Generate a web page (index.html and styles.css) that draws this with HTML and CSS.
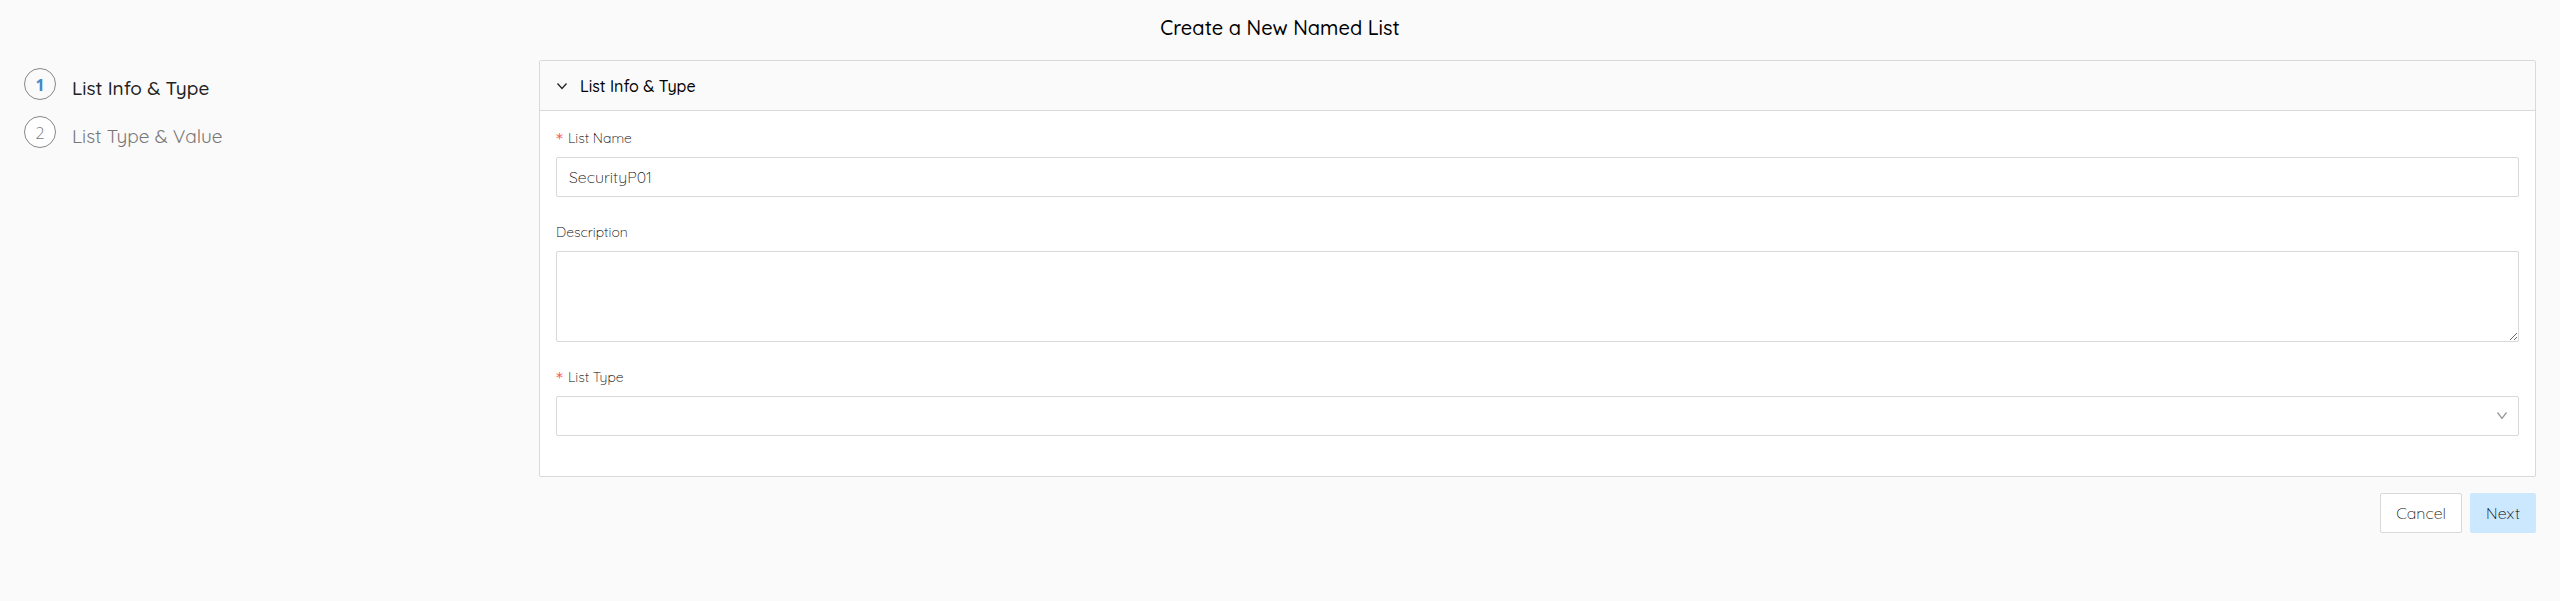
FILE: index.html
```html
<!DOCTYPE html>
<html lang="en">
<head>
<meta charset="utf-8">
<meta name="viewport" content="width=device-width, initial-scale=1">
<title>Create a New Named List</title>
<link rel="stylesheet" href="styles.css">
</head>
<body>
<main class="page">
  <h1 class="page-title">Create a New Named List</h1>
  <div class="layout">
    <ol class="steps">
      <li class="step step-active" aria-current="step"><span class="step-number">1</span><span class="step-name">List Info &amp; Type</span></li>
      <li class="step"><span class="step-number">2</span><span class="step-name">List Type &amp; Value</span></li>
    </ol>
    <form class="form">
      <section class="panel">
        <h2 class="panel-heading">
          <button type="button" class="panel-toggle" aria-expanded="true">
            <svg class="toggle-icon" viewBox="0 0 12 12" aria-hidden="true"><path d="M1.5 3.5 6 8.5 10.5 3.5"/></svg>
            <span>List Info &amp; Type</span>
          </button>
        </h2>
        <div class="panel-body">
          <div class="field">
            <label class="label required" for="list-name">List Name</label>
            <input class="control" id="list-name" type="text" value="SecurityP01" required>
          </div>
          <div class="field">
            <label class="label" for="description">Description</label>
            <textarea class="control description" id="description"></textarea>
          </div>
          <div class="field">
            <label class="label required" for="list-type">List Type</label>
            <div class="select-box">
              <select class="control" id="list-type" required><option value=""></option></select>
              <svg class="select-icon" viewBox="0 0 12 12" aria-hidden="true"><path d="M1.5 2.5 6 8.5 10.5 2.5"/></svg>
            </div>
          </div>
        </div>
      </section>
      <div class="actions">
        <button type="button" class="button">Cancel</button>
        <button type="submit" class="button button-primary">Next</button>
      </div>
    </form>
  </div>
</main>
</body>
</html>
```
FILE: styles.css
```css
* { box-sizing: border-box; }

body {
  margin: 0;
  background: #fafafa;
  color: #000;
  font-family: Quicksand, Lato, sans-serif;
  font-size: 16px;
  font-weight: 300;
}

.page { padding: 12px 24px 24px; }

.page-title {
  margin: 0 0 16px;
  font-size: 20px;
  font-weight: 500;
  line-height: 32px;
  text-align: center;
}

.layout {
  display: grid;
  grid-template-columns: 20.5% minmax(0, 1fr);
}

.steps {
  display: flex;
  flex-direction: column;
  gap: 16px;
  margin: 0;
  padding: 8px 0 0;
  list-style: none;
}

.step {
  display: flex;
  gap: 16px;
  height: 32px;
  color: #777;
  font-weight: 400;
}

.step-number {
  width: 32px;
  height: 32px;
  border: 1px solid #888;
  border-radius: 50%;
  background: #fff;
  font-family: "Open Sans", sans-serif;
  font-weight: 300;
  line-height: 32px;
  text-align: center;
}

.step-name {
  padding-top: 4px;
  font-size: 19px;
  line-height: 32px;
}

.step-active { color: #222; font-weight: 500; }

.step-active .step-number {
  background: #fafafa;
  color: #4488cc;
  font-weight: 700;
}

.panel {
  border: 1px solid #d9d9d9;
  border-radius: 2px;
  background: #fff;
}

.panel-heading {
  margin: 0;
  border-bottom: 1px solid #d9d9d9;
  background: #fafafa;
}

.panel-toggle {
  display: flex;
  align-items: center;
  gap: 12px;
  width: 100%;
  height: 49px;
  padding: 0 16px;
  border: 0;
  background: transparent;
  color: #000;
  font: inherit;
  font-size: 16px;
  font-weight: 500;
}

.toggle-icon, .select-icon {
  width: 12px;
  height: 12px;
  fill: none;
  stroke: #222;
  stroke-width: 1.3;
}

.panel-body {
  display: flex;
  flex-direction: column;
  gap: 24px;
  padding: 16px 16px 40px;
}

.label {
  display: block;
  margin-bottom: 8px;
  font-size: 14px;
  line-height: 22px;
}

.required::before {
  content: "*";
  margin-right: 5px;
  color: #ff4d4f;
  font-family: "DejaVu Sans", sans-serif;
  font-weight: 400;
}

.control {
  display: block;
  width: 100%;
  height: 40px;
  padding: 0 12px;
  border: 1px solid #d9d9d9;
  border-radius: 2px;
  outline: 0;
  appearance: none;
  background: #fff;
  color: #111;
  font: inherit;
}

.description {
  height: 91px;
  padding: 8px 12px;
  resize: vertical;
}

.select-box { position: relative; }

.select-icon {
  position: absolute;
  top: 14px;
  right: 11px;
  stroke: #999;
  pointer-events: none;
}

.actions {
  display: flex;
  justify-content: flex-end;
  gap: 8px;
  margin-top: 16px;
}

.button {
  height: 40px;
  padding: 0 15px;
  border: 1px solid #d9d9d9;
  border-radius: 2px;
  background: #fff;
  color: #111;
  font: inherit;
}

.button-primary {
  border-color: #cce8ff;
  background: #cce8ff;
  color: #000;
}
```
